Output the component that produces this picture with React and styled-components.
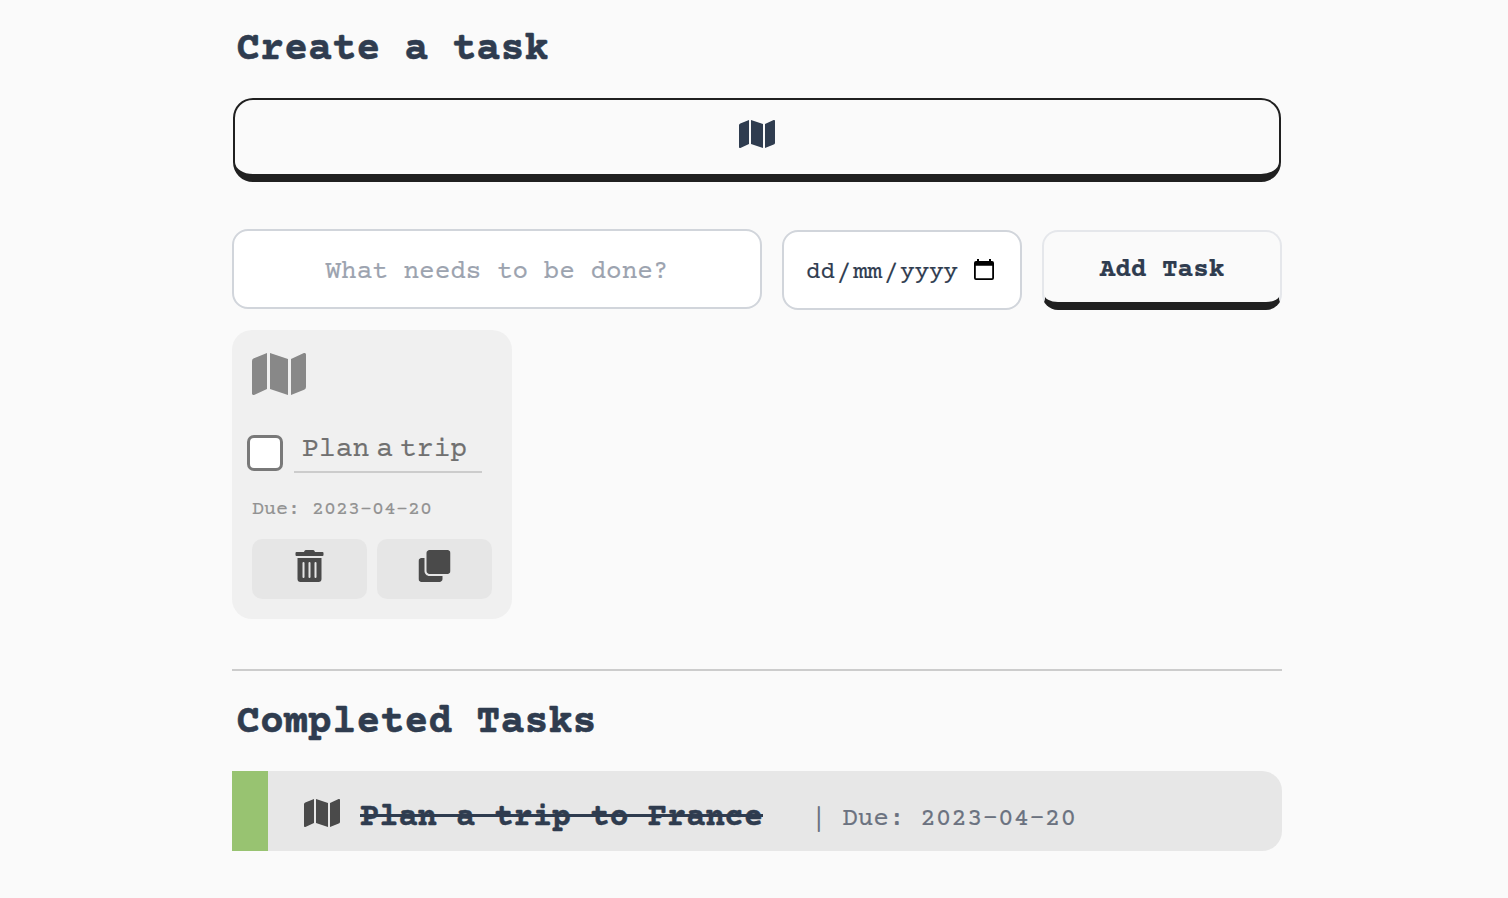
import React from "react";
import styled, { createGlobalStyle } from "styled-components";
import { FaMap, FaTrashAlt, FaClone } from "react-icons/fa";

const GlobalStyle = createGlobalStyle`
  * { box-sizing: border-box; }
  body {
    margin: 0;
    background: #fafafa;
    color: #2f3c4f;
    font-family: "Courier Prime", "Liberation Mono", monospace;
    -webkit-text-stroke: 0.2px;
  }
  button, input { font-family: inherit; color: inherit; }
  svg { display: block; }
`;

const MapIcon = styled(FaMap)`
  width: 1.125em;
  height: 1em;
`;

const Page = styled.main`
  width: 1050px;
  height: 898px;
  margin-left: 232px;
  padding-top: 24px;
  overflow: hidden;
`;

const Heading = styled.h1`
  margin: 0;
  padding: 3px 0 0 4px;
  height: 48px;
  font-size: 40px;
  line-height: 48px;
  font-weight: 700;
  letter-spacing: 0.05px;
  white-space: pre;
  -webkit-text-stroke: 0.5px;
`;

const IconPicker = styled.button`
  display: flex;
  justify-content: center;
  align-items: flex-start;
  width: 1048px;
  height: 84px;
  margin: 26px 1px 0;
  padding: 18px 0 0;
  background: #fafafa;
  border: 2px solid #202020;
  border-bottom-width: 8px;
  border-radius: 20px;
  font-size: 32px;
`;

const Form = styled.form`
  display: flex;
  gap: 20px;
  margin-top: 47px;
  height: 81px;
`;

const TaskInput = styled.input`
  width: 530px;
  height: 80px;
  padding: 6px 0 0;
  border: 2px solid #d1d5db;
  border-radius: 16px;
  background: #fff;
  text-align: center;
  font-size: 26px;
  outline: none;
  &::placeholder { color: #9ca3af; opacity: 1; }
`;

const DateField = styled.div`
  display: flex;
  align-items: center;
  gap: 2px;
  width: 240px;
  height: 80px;
  margin-top: 1px;
  padding: 4px 0 0 22px;
  border: 2px solid #d1d5db;
  border-radius: 16px;
  background: #fff;
  font-size: 24px;
`;

const CalendarIcon = styled.svg`
  margin: -4px 0 0 14px;
`;

const AddButton = styled.button`
  width: 240px;
  height: 80px;
  margin-top: 1px;
  padding: 6px 0 0;
  border: 2px solid #e5e7eb;
  border-bottom: 8px solid #202020;
  border-radius: 16px;
  background: #fafafa;
  font-size: 26px;
  font-weight: 700;
`;

const Card = styled.article`
  width: 280px;
  height: 289px;
  margin-top: 20px;
  padding: 20px;
  border-radius: 20px;
  background: #f0f0f0;
`;

const CardIcon = styled.div`
  height: 48px;
  color: #888;
  font-size: 48px;
`;

const TaskLine = styled.div`
  display: flex;
  gap: 11px;
  height: 48px;
  margin: 27px 0 0 -5px;
`;

const Checkbox = styled.span`
  width: 36px;
  height: 36px;
  margin-top: 10px;
  border: 3px solid #797979;
  border-radius: 7px;
  background: #fff;
`;

const TaskName = styled.div`
  width: 188px;
  height: 48px;
  padding-left: 8px;
  border-bottom: 2px solid #ccc;
  color: #707070;
  font-size: 28px;
  line-height: 50px;
  letter-spacing: 0.05px;
  word-spacing: -10px;
  white-space: pre;
`;

const CardDue = styled.div`
  height: 30px;
  margin-top: 21px;
  color: #929292;
  font-size: 20px;
  line-height: 32px;
`;

const Actions = styled.div`
  display: flex;
  gap: 10px;
  margin-top: 15px;
`;

const ActionButton = styled.button`
  display: flex;
  justify-content: center;
  width: 115px;
  height: 60px;
  padding: 11px 1px 0 0;
  border: 0;
  border-radius: 10px;
  background: #e6e6e6;
  color: #4a4a4a;
  font-size: 32px;
  svg { transform: translateX(0.5px); }
`;

const Divider = styled.hr`
  height: 2px;
  margin: 50px 0 26px;
  border: 0;
  background: #ccc;
`;

const CompletedRow = styled.div`
  display: flex;
  align-items: flex-start;
  height: 80px;
  margin-top: 26px;
  padding-left: 36px;
  border-left: 36px solid #98c371;
  border-radius: 0 20px 20px 0;
  background: #e7e7e7;
`;

const RowIcon = styled.div`
  margin: 26px 20px 0 0;
  color: #4a4a4a;
  font-size: 32px;
`;

const DoneName = styled.div`
  position: relative;
  width: 403px;
  margin-top: 22px;
  font-size: 32px;
  line-height: 50px;
  font-weight: 700;
  white-space: pre;
  -webkit-text-stroke: 0.4px;
  &::after {
    content: "";
    position: absolute;
    left: 0;
    top: 21px;
    width: 403px;
    height: 3px;
    background: #2f3c4f;
  }
`;

const DoneDue = styled.div`
  margin: 34px 0 0 48px;
  color: #6b7280;
  font-size: 26px;
  line-height: 30px;
  white-space: pre;
`;

const Pipe = styled.span`
  display: inline-block;
  transform: scaleY(1.14);
  -webkit-text-stroke: 0;
`;

export default function App() {
  return (
    <>
      <GlobalStyle />
      <Page>
        <Heading>Create a task</Heading>
        <IconPicker type="button" aria-label="Choose icon"><MapIcon /></IconPicker>
        <Form onSubmit={(e) => e.preventDefault()}>
          <TaskInput placeholder="What needs to be done?" />
          <DateField>
            <span>dd</span><span>/</span><span>mm</span><span>/</span><span>yyyy</span>
            <CalendarIcon width="20" height="22" viewBox="0 0 20 22">
              <path fill="#000" fillRule="evenodd" d="M3 0h2v2h10V0h2v2h1a2 2 0 0 1 2 2v15a2 2 0 0 1-2 2H2a2 2 0 0 1-2-2V4a2 2 0 0 1 2-2h1zM1.8 6.8v12.4h16.4V6.8z" />
            </CalendarIcon>
          </DateField>
          <AddButton type="submit">Add Task</AddButton>
        </Form>
        <Card>
          <CardIcon><MapIcon /></CardIcon>
          <TaskLine>
            <Checkbox role="checkbox" aria-checked="false" />
            <TaskName>Plan a trip</TaskName>
          </TaskLine>
          <CardDue>Due: 2023-04-20</CardDue>
          <Actions>
            <ActionButton type="button" aria-label="Delete"><FaTrashAlt /></ActionButton>
            <ActionButton type="button" aria-label="Duplicate"><FaClone /></ActionButton>
          </Actions>
        </Card>
        <Divider />
        <Heading as="h2">Completed Tasks</Heading>
        <CompletedRow>
          <RowIcon><MapIcon /></RowIcon>
          <DoneName>Plan a trip to France</DoneName>
          <DoneDue><Pipe>|</Pipe> Due: 2023-04-20</DoneDue>
        </CompletedRow>
      </Page>
    </>
  );
}
